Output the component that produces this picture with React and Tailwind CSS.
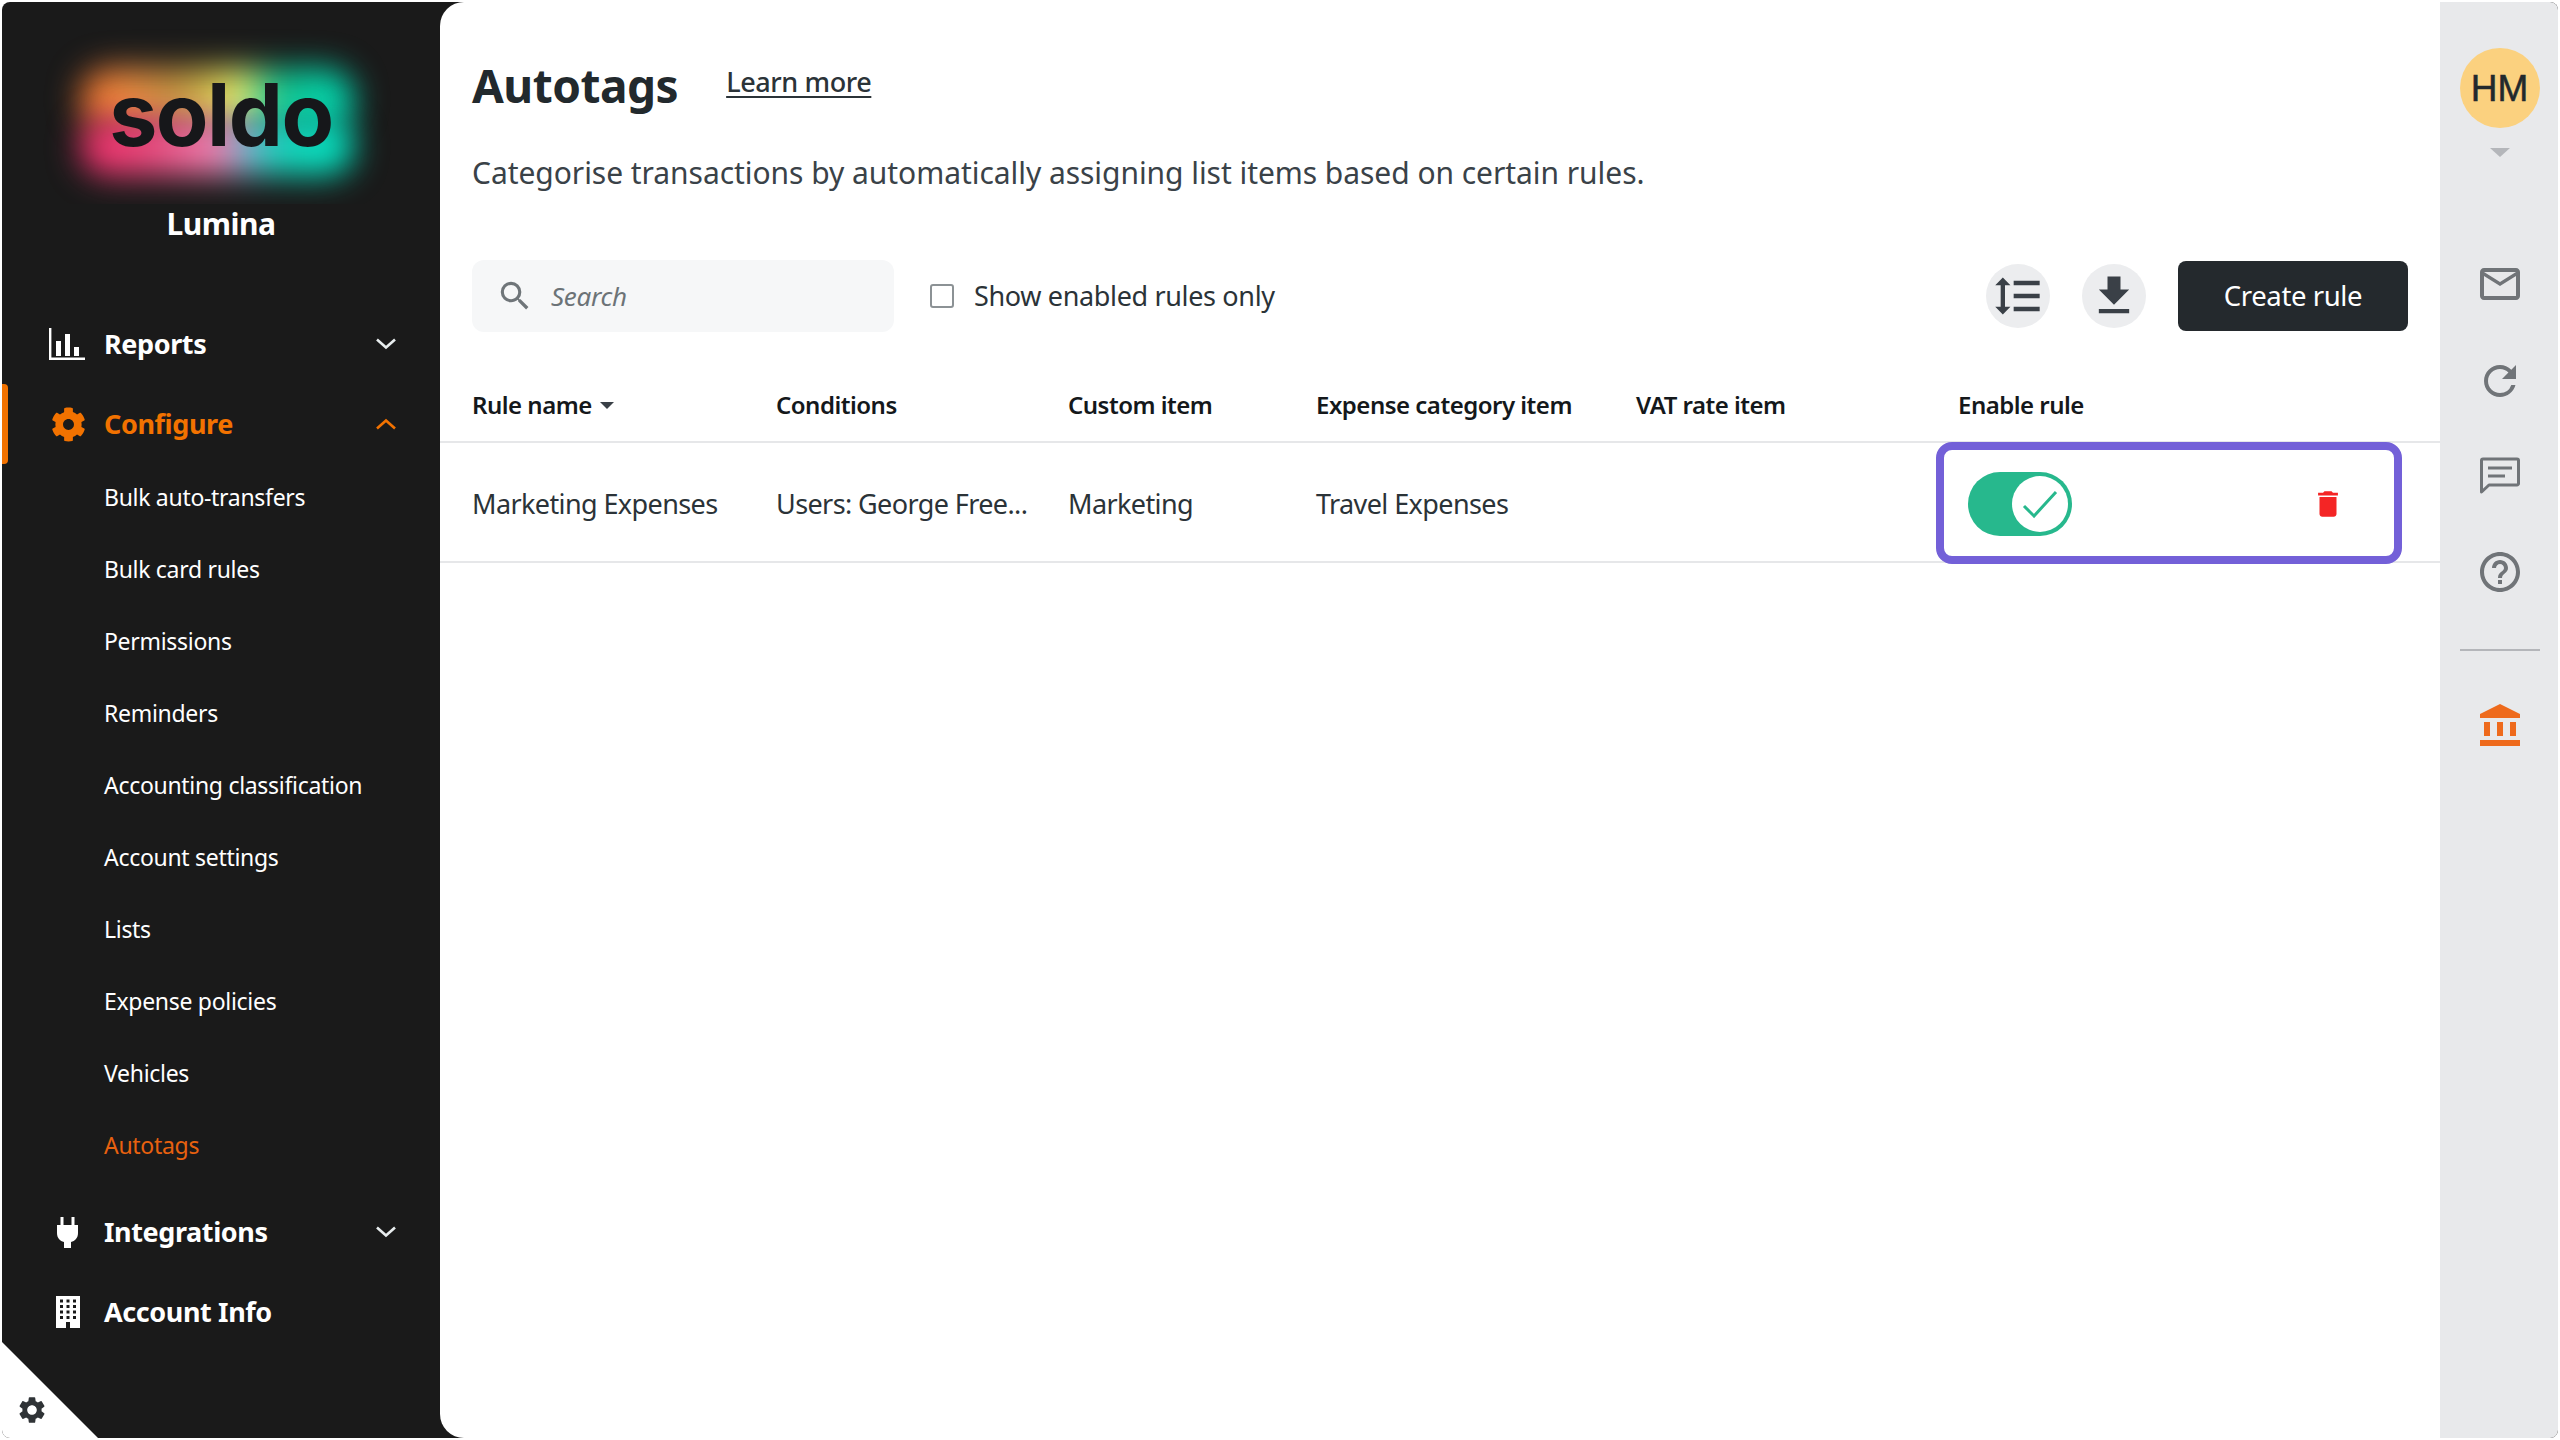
import { MdSearch, MdFormatLineSpacing, MdFileDownload, MdDelete, MdSettings, MdOutlineMailOutline, MdRefresh, MdHelpOutline, MdAccountBalance } from "react-icons/md"
import { FaCog } from "react-icons/fa"

const subItems = [
  "Bulk auto-transfers",
  "Bulk card rules",
  "Permissions",
  "Reminders",
  "Accounting classification",
  "Account settings",
  "Lists",
  "Expense policies",
  "Vehicles",
]

const ChevronDown = () => (
  <svg viewBox="0 0 20 12" className="w-[20px] h-[12px]" fill="none" stroke="#e8edee" strokeWidth="2.6">
    <path d="M1 1.5l9 8 9-8" />
  </svg>
)

const ChevronUp = () => (
  <svg viewBox="0 0 20 12" className="w-[20px] h-[12px]" fill="none" stroke="#f27200" strokeWidth="2.6">
    <path d="M1 10.5l9-8 9 8" />
  </svg>
)

const ReportsIcon = () => (
  <svg viewBox="0 0 36 32" className="w-[36px] h-[32px]" fill="#fff">
    <path d="M0 0h2.4v29.6H36V32H0z" />
    <rect x="7" y="13" width="5" height="15" />
    <rect x="16" y="6" width="5" height="22" />
    <rect x="25" y="19" width="5" height="9" />
  </svg>
)

const PlugIcon = () => (
  <svg viewBox="0 0 21 31" className="w-[21px] h-[31px]" fill="#fff">
    <rect x="3.5" width="3" height="10" />
    <rect x="14.5" width="3" height="10" />
    <path d="M0 8h21v8c0 5-3 8-7 9v6H7v-6c-4-1-7-4-7-9z" />
  </svg>
)

const BuildingIcon = () => (
  <svg viewBox="0 0 24 32" className="w-[24px] h-[32px]">
    <rect width="24" height="32" fill="#fff" />
    {[4, 10.5, 17].map((x) =>
      [3.5, 9, 14.5, 20].map((y) => <rect key={x + "-" + y} x={x} y={y} width="3" height="3" fill="#1a1a1a" />)
    )}
    <rect x="10" y="26" width="4" height="6" fill="#1a1a1a" />
  </svg>
)

const ChatIcon = () => (
  <svg viewBox="0 0 40 40" className="w-[40px] h-[40px]" fill="none" stroke="#707478" strokeWidth="3">
    <path d="M1.5 35V3.5a1.5 1.5 0 0 1 1.5-1.5h34a1.5 1.5 0 0 1 1.5 1.5v23a1.5 1.5 0 0 1-1.5 1.5H9z" strokeLinejoin="round" />
    <path d="M8 11h24M8 19h17" />
  </svg>
)

const columns = ["Rule name", "Conditions", "Custom item", "Expense category item", "VAT rate item", "Enable rule"]

const App = () => {
  return (
    <div className="w-[2560px] h-[1440px] bg-white p-[2px] overflow-hidden" style={{ fontFamily: '"Noto Sans", sans-serif' }}>
      <div className="flex h-full bg-[#1a1a1a] rounded-lg overflow-hidden">
        <aside className="relative w-[438px] shrink-0 text-white">
          <div className="relative h-[202px] flex items-end justify-center pb-[46px]">
            <div className="absolute inset-0 overflow-hidden">
              <div className="absolute left-[78px] top-[66px] w-[274px] h-[62px] rounded-[30px] blur-[16px] bg-[linear-gradient(90deg,#f0702c_0%,#e88a40_18%,#c09040_35%,#d8c850_50%,#e8f070_58%,#10c08c_72%,#00dcb8_100%)]" />
              <div className="absolute left-[78px] top-[116px] w-[274px] h-[58px] rounded-[28px] blur-[16px] bg-[linear-gradient(90deg,#f02c68_0%,#e8487c_25%,#f080b0_50%,#70b4d0_62%,#18d0b8_72%,#00e8c4_100%)]" />
            </div>
            <span className="relative text-[#16171a] text-[86px] leading-none font-bold tracking-[-1.5px]" style={{ fontFamily: "Inter, sans-serif" }}>
              soldo
            </span>
          </div>
          <div className="text-center text-[30px] font-bold leading-[40px] tracking-[-0.5px]">Lumina</div>
          <nav className="mt-[60px] font-bold text-[27px] tracking-[-0.4px]">
            <div className="flex items-center h-[80px] pl-[47px] pr-[44px]">
              <span className="w-[55px] flex"><ReportsIcon /></span>
              <span className="flex-1">Reports</span>
              <ChevronDown />
            </div>
            <div className="relative flex items-center h-[80px] pl-[47px] pr-[44px] text-[#f27200]">
              <span className="absolute left-0 top-0 w-[6px] h-[80px] bg-[#f27200] rounded-r" />
              <span className="w-[55px] flex pl-[2px]"><FaCog className="w-[35px] h-[35px]" /></span>
              <span className="flex-1">Configure</span>
              <ChevronUp />
            </div>
            <ul className="-mt-[3px] font-normal text-[23px] tracking-[-0.3px]">
              {subItems.map((s) => (
                <li key={s} className="flex items-center h-[72px] pl-[102px]">{s}</li>
              ))}
              <li className="flex items-center h-[72px] pl-[102px] text-[#e8610f]">Autotags</li>
            </ul>
            <div className="mt-[11px] flex items-center h-[80px] pl-[47px] pr-[44px]">
              <span className="w-[55px] flex pl-[8px]"><PlugIcon /></span>
              <span className="flex-1">Integrations</span>
              <ChevronDown />
            </div>
            <div className="flex items-center h-[80px] pl-[54px]">
              <span className="w-[48px] flex"><BuildingIcon /></span>
              <span>Account Info</span>
            </div>
          </nav>
          <svg viewBox="0 0 96 96" className="absolute left-0 bottom-0 w-[96px] h-[96px]" fill="#fff">
            <path d="M0 0L96 96H0z" />
          </svg>
          <MdSettings className="absolute left-[14px] bottom-[12px] w-[32px] h-[32px] text-[#2f3336]" />
        </aside>

        <main className="flex-1 bg-white rounded-l-[24px] text-[#2b3338]">
          <div className="flex items-center h-[110px] pt-[56px] pl-[32px]">
            <h1 className="text-[46px] leading-none font-bold text-[#22292d] tracking-[-0.5px]">Autotags</h1>
            <a className="ml-[48px] -mt-[6px] text-[27px] font-medium underline underline-offset-4 tracking-[-0.4px]">Learn more</a>
          </div>
          <p className="mt-[41px] pl-[32px] text-[30px] leading-[40px] text-[#3a4248] tracking-[-0.05px]">
            Categorise transactions by automatically assigning list items based on certain rules.
          </p>
          <div className="mt-[67px] flex items-center pl-[32px] pr-[32px] h-[72px]">
            <div className="flex items-center w-[422px] h-[72px] rounded-xl bg-[#f6f7f8] pl-[24px]">
              <MdSearch className="w-[38px] h-[38px] text-[#6f7579]" />
              <span className="ml-[17px] italic text-[26px] text-[#6c7377] tracking-[-0.3px]">Search</span>
            </div>
            <span className="ml-[36px] w-[24px] h-[24px] border-2 border-[#8c9295] rounded-[3px]" />
            <span className="ml-[20px] text-[27px] tracking-[-0.35px]">Show enabled rules only</span>
            <div className="ml-auto flex items-center">
              <span className="w-[64px] h-[64px] rounded-full bg-[#ecedef] flex items-center justify-center">
                <MdFormatLineSpacing className="w-[52px] h-[52px] text-[#3a4047]" />
              </span>
              <span className="ml-[32px] w-[64px] h-[64px] rounded-full bg-[#ecedef] flex items-center justify-center">
                <MdFileDownload className="w-[52px] h-[52px] text-[#3a4047]" />
              </span>
              <button className="ml-[32px] w-[230px] h-[70px] rounded-lg bg-[#24292d] text-white text-[27.5px] tracking-[-0.4px]">Create rule</button>
            </div>
          </div>
          <div className="mt-[37px] grid grid-cols-[304px_292px_248px_320px_322px_1fr] items-center h-[74px] pl-[32px] font-semibold text-[24px] text-[#14181b] tracking-[-0.5px] border-b-2 border-[#e6e7e9]">
            {columns.map((c, i) => (
              <div key={c} className="flex items-center">
                {c}
                {i === 0 && <span className="ml-[8px] border-x-[7px] border-x-transparent border-t-[7px] border-t-[#3a4047]" />}
              </div>
            ))}
          </div>
          <div className="relative grid grid-cols-[304px_292px_248px_320px_322px_1fr] items-center h-[120px] pt-[4px] pl-[32px] text-[27px] tracking-[-0.6px] border-b-2 border-[#e6e7e9]">
            <div>Marketing Expenses</div>
            <div>Users: George Free...</div>
            <div>Marketing</div>
            <div>Travel Expenses</div>
            <div />
            <div />
            <div className="absolute left-[1496px] -top-[1px] w-[466px] h-[122px] pt-[2px] border-[8px] border-[#7360d8] rounded-2xl flex items-center justify-between pl-[24px] pr-[49px]">
              <span className="flex justify-end items-center w-[104px] h-[64px] rounded-full bg-[#27b88d] pr-[4px]">
                <span className="w-[56px] h-[56px] rounded-full bg-white flex items-center justify-center">
                  <svg viewBox="0 0 36 30" className="w-[36px] h-[30px]" fill="none" stroke="#27b88d" strokeWidth="3">
                    <path d="M2 17l10 10L34 3" />
                  </svg>
                </span>
              </span>
              <MdDelete className="w-[34px] h-[34px] text-[#f42525]" />
            </div>
          </div>
        </main>

        <aside className="w-[118px] shrink-0 pl-[1px] bg-[#e8e9eb] flex flex-col items-center">
          <div className="mt-[46px] w-[80px] h-[80px] pt-[2px] rounded-full bg-[#fbd17f] flex items-center justify-center text-[37px] text-[#22292d] [-webkit-text-stroke:0.5px_#22292d]" style={{ fontFamily: '"Liberation Sans", sans-serif' }}>
            HM
          </div>
          <span className="mt-[20px] border-x-[10px] border-x-transparent border-t-[9px] border-t-[#b4b6ba]" />
          <MdOutlineMailOutline className="mt-[103px] w-[48px] h-[48px] text-[#707478]" />
          <MdRefresh className="mt-[49px] w-[48px] h-[48px] text-[#707478]" />
          <span className="mt-[52px]"><ChatIcon /></span>
          <MdHelpOutline className="mt-[51px] w-[48px] h-[48px] text-[#707478]" />
          <div className="mt-[53px] w-[80px] h-[2px] bg-[#b4b6ba]" />
          <MdAccountBalance className="mt-[51px] w-[48px] h-[48px] text-[#ee6a1c]" />
        </aside>
      </div>
    </div>
  )
}

export default App
